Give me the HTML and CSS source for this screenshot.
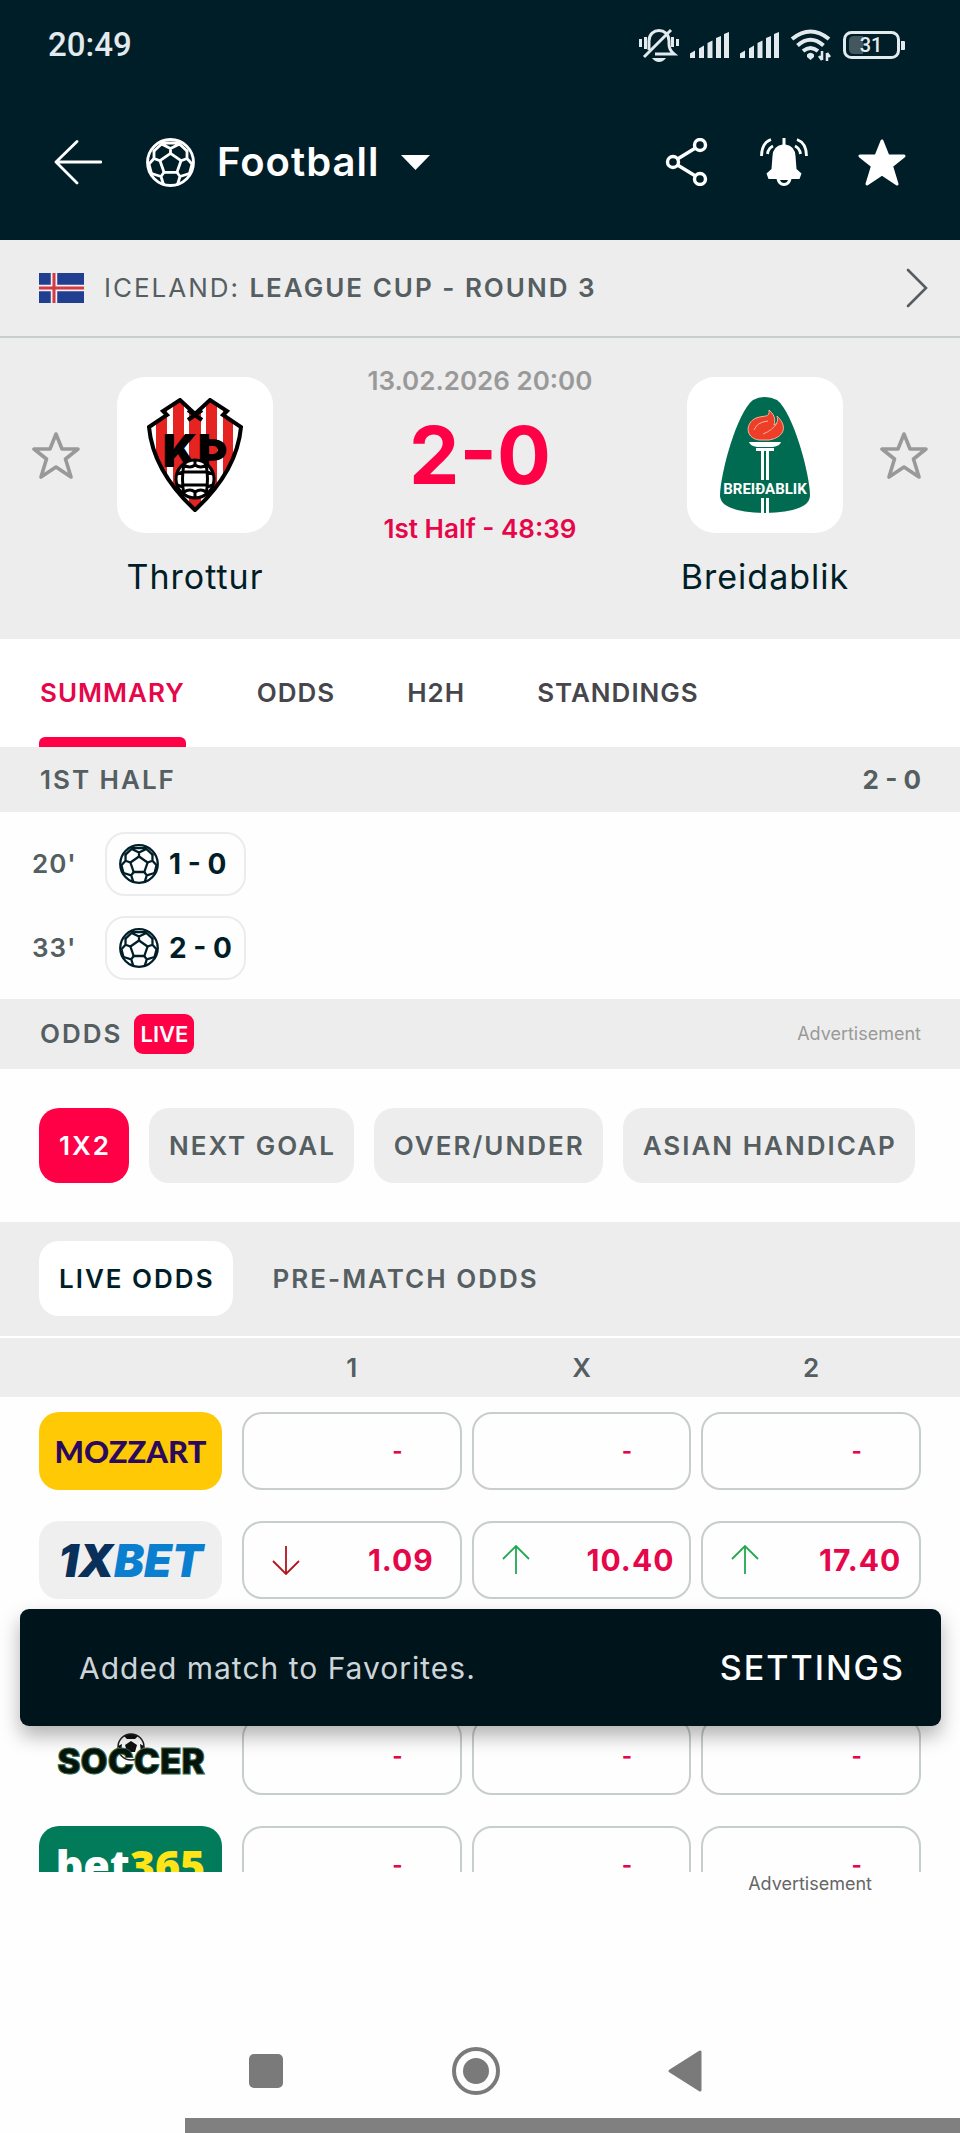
FILE: index.html
```html
<!DOCTYPE html>
<html lang="en">
<head>
<meta charset="utf-8">
<meta name="viewport" content="width=device-width, initial-scale=1">
<title>Throttur - Breidablik</title>
<link rel="stylesheet" href="styles.css">
</head>
<body>
<svg class="defs" aria-hidden="true">
  <symbol id="ball" viewBox="0 0 49 49">
    <g fill="none" stroke="currentColor" stroke-width="2.800" stroke-linejoin="round" stroke-linecap="round">
      <circle cx="24.500" cy="24.500" r="23"/>
      <path d="M24.500 15.300 35 22.700 31 34.300H18L14 22.700Z"/>
      <path d="M24.500 15.300V10.500M24.500 10.500 15.500 6M24.500 10.500 33.500 6M15.500 6 8 13M33.500 6 41 13M16 5 33 5"/>
      <path d="M35 22.700 41 20.500 41 13M41 20.500 46 26 43.500 35.500"/>
      <path d="M14 22.700 8 20.500 8 13M8 20.500 3 26 5.500 35.500"/>
      <path d="M31 34.300 34 38.500 31.500 46.500M34 38.500 43.500 35.500"/>
      <path d="M18 34.300 15 38.500 17.500 46.500M15 38.500 5.500 35.500"/>
    </g>
  </symbol>
  <symbol id="star" viewBox="0 0 48 48">
    <path d="M24 3 30 18H46L33.500 28 39 46 24 36 9 46 14.500 28 2 18H18Z"/>
  </symbol>
  <symbol id="signal" viewBox="0 0 39 26">
    <path fill="currentColor" d="M0 21.500 5 18.500V26H0ZM9 16.500 14 13.500V26H9ZM17.500 11 22.500 8.500V26H17.500ZM26 6 31 4V26H26ZM34 2 39 0V26H34Z"/>
  </symbol>
  <symbol id="down" viewBox="0 0 28 30">
    <path d="M14 1V29M1 16 14 29 27 16" fill="none" stroke="currentColor" stroke-width="1.800"/>
  </symbol>
  <symbol id="up" viewBox="0 0 28 30">
    <path d="M14 29V1M1 14 14 1 27 14" fill="none" stroke="currentColor" stroke-width="1.800"/>
  </symbol>
</svg>

<header class="top">
  <div class="status">
    <time class="clock">20:49</time>
    <div class="status-icons">
      <svg width="40" height="34" viewBox="0 0 40 34" fill="none" stroke="currentColor" stroke-width="3">
        <path d="M10 22V13C10 -1 30 -1 30 13V16Q30 22 35 26H16" />
        <path d="M32 2 5 29"/>
        <path d="M13 30H27Q24 34 20 34T13 30" fill="currentColor" stroke="none"/>
        <path d="M1.500 11V19M6.500 9V21M33.500 9V19M38.500 11V18"/>
      </svg>
      <svg width="39" height="26"><use href="#signal"/></svg>
      <svg width="39" height="26"><use href="#signal"/></svg>
      <svg width="42" height="32" viewBox="0 0 42 32" fill="none" stroke="currentColor" stroke-width="4">
        <path d="M2 10Q20.500-5 39 10M7.500 16.500Q20.500 5 33.500 16.500M13 22Q20.500 16 28 22"/>
        <path d="M17 25.500Q20.500 22 24 25.500V28L20.500 31 17 28Z" fill="currentColor" stroke="none"/>
        <path d="M32 22V31M37 24V32M29 27 32 31M37 24 40 28" stroke-width="2.500"/>
      </svg>
      <svg width="63" height="28" viewBox="0 0 63 28">
        <rect x="1.500" y="1.500" width="54" height="25" rx="7" fill="none" stroke="currentColor" stroke-width="3"/>
        <path d="M11 5H20V23H11Q6 23 6 18V10Q6 5 11 5" fill="#43575f"/>
        <path d="M58 10H61Q62 10 62 11V18Q62 19 61 19H58Z" fill="currentColor"/>
        <text class="battery-text" x="28" y="21" text-anchor="middle">31</text>
      </svg>
    </div>
  </div>
  <div class="toolbar">
    <button class="icon-btn" aria-label="Back">
      <svg width="48" height="48" viewBox="0 0 48 48" fill="none" stroke="currentColor" stroke-linecap="round" stroke-linejoin="round"><path d="M47 24H2M23 3.500 2 24 23 45" stroke-width="2.800"/></svg>
    </button>
    <button class="sport">
      <svg width="49" height="49"><use href="#ball"/></svg>
      <span>Football</span>
      <svg width="29" height="15" viewBox="0 0 29 15"><path d="M0 0H29L14.500 15Z" fill="currentColor"/></svg>
    </button>
    <div class="actions">
      <button class="icon-btn" aria-label="Share">
        <svg width="48" height="48" viewBox="0 0 48 48" fill="none" stroke="currentColor" stroke-width="3.400"><circle cx="11" cy="24" r="5.500"/><circle cx="38" cy="7" r="5.500"/><circle cx="38" cy="41" r="5.500"/><path d="M15.500 21 33.500 10M15.500 27 33.500 38"/></svg>
      </button>
      <button class="icon-btn" aria-label="Notifications">
        <svg width="48" height="48" viewBox="0 0 48 48"><path fill="currentColor" d="M22.500 0H25.500V6.500Q35 8 35.500 18L36.500 31 41.500 35.500 39.500 41H31.500Q30 48 24 48T16.500 41H8.500L6.500 35.500 11.500 31 12.500 18Q13 8 22.500 6.500Z"/><path fill="#001e28" d="M20 42H28Q27 45 24 45T20 42"/><path d="M1.500 18Q1.500 5 11 1.500M7.500 16Q8 10.500 13 8M46.500 18Q46.500 5 37 1.500M40.500 16Q40 10.500 35 8" fill="none" stroke="currentColor" stroke-width="2.800"/></svg>
      </button>
      <button class="icon-btn" aria-label="Remove from favorites">
        <svg width="48" height="48" fill="currentColor" stroke="currentColor" stroke-width="3" stroke-linejoin="round"><use href="#star"/></svg>
      </button>
    </div>
  </div>
</header>

<main class="content">
  <a class="league" href="#league">
    <svg width="45" height="30" viewBox="0 0 45 30"><path fill="#213e91" d="M0 0H45V30H0Z"/><path d="M15 0V30M0 15H45" stroke="#f4eef0" stroke-width="6.500"/><path d="M15 0V30M0 15H45" stroke="#d43a41" stroke-width="3"/></svg>
    <span class="league-name">ICELAND: <b>LEAGUE CUP - ROUND 3</b></span>
    <svg width="22" height="40" viewBox="0 0 22 40"><path d="M2 2 20 20 2 38" fill="none" stroke="currentColor" stroke-width="2.600" stroke-linecap="round"/></svg>
  </a>

  <section class="match">
    <button class="icon-btn fav" aria-label="Favorite Throttur"><svg width="48" height="48" fill="none" stroke="currentColor" stroke-width="3.600" stroke-linejoin="round"><use href="#star"/></svg></button>
    <div class="crest">
      <svg width="96" height="114" viewBox="0 0 96 114" role="img" aria-label="Throttur crest">
        <defs><clipPath id="shield"><path d="M2 29 20 17 16 13 33 2 48 16 63 2 80 13 76 17 94 29Q90 73 48 112 6 73 2 29Z"/></clipPath></defs>
        <g clip-path="url(#shield)"><path fill="#fff" d="M0 0H96V114H0Z"/><path fill="#e52320" d="M9 0H20V114H9ZM26 0H37V114H26ZM42 0H54V114H42ZM59 0H70V114H59ZM76 0H86V114H76Z"/></g>
        <path d="M2 29 20 17 16 13 33 2 48 16 63 2 80 13 76 17 94 29Q90 73 48 112 6 73 2 29ZM41 22 55 12M41 12 55 22" fill="none" stroke="#000" stroke-width="4"/>
        <text class="crest-kp" x="49" y="69" text-anchor="middle">KÞ</text>
        <circle cx="48" cy="81" r="19" fill="#fff" stroke="#000" stroke-width="3"/>
        <path d="M37 66Q34 81 37 97M59 66Q62 81 59 97M37 74H59M37 87H59M48 62V67M48 94V100M37 67Q43 71 48 67 54 71 59 67M37 94Q43 90 48 94 54 90 59 94M30 76 36 74M30 87 36 89M66 76 60 74M66 87 60 89" fill="none" stroke="#000" stroke-width="3"/>
      </svg>
    </div>
    <div class="result">
      <time class="date">13.02.2026 20:00</time>
      <strong class="score">2-0</strong>
      <span class="period">1st Half - 48:39</span>
    </div>
    <div class="crest">
      <svg width="92" height="118" viewBox="0 0 92 118" role="img" aria-label="Breidablik crest">
        <path fill="#006b50" d="M34 4Q46-2 58 4C74 16 91 78 91 100Q90 116 46 117 2 116 1 100C1 78 18 16 34 4Z"/>
        <path fill="#ef3e27" stroke="#f3b4a0" stroke-width="1" d="M40 44C26 42 26 27 37 22 46 19 51 22 50 14 57 20 56 25 55 29 59 27 59 24 58 20 68 29 67 41 50 44Z"/>
        <path d="M35 34Q38 26 49 25M44 38Q54 34 58 27" fill="none" stroke="#f3b4a0" stroke-width="1"/>
        <path fill="#fff" d="M30 46H62Q61 50 54 51H38Q31 50 30 46ZM37 52H55V55H37ZM42 55H45V84H42ZM47 55H50V84H47ZM42 102H45V118H42ZM47 102H50V118H47Z"/>
        <text class="crest-name" x="46" y="98" text-anchor="middle">BREIÐABLIK</text>
      </svg>
    </div>
    <button class="icon-btn fav" aria-label="Favorite Breidablik"><svg width="48" height="48" fill="none" stroke="currentColor" stroke-width="3.600" stroke-linejoin="round"><use href="#star"/></svg></button>
    <h2 class="team home">Throttur</h2>
    <h2 class="team away">Breidablik</h2>
  </section>

  <nav class="tabs">
    <a class="tab active" href="#summary">SUMMARY</a>
    <a class="tab" href="#odds">ODDS</a>
    <a class="tab" href="#h2h">H2H</a>
    <a class="tab" href="#standings">STANDINGS</a>
  </nav>

  <div class="section-bar half"><span>1ST HALF</span><span class="half-score">2 - 0</span></div>
  <ul class="events">
    <li class="event"><span class="minute">20'</span><span class="goal"><svg width="40" height="40"><use href="#ball"/></svg><span>1 - 0</span></span></li>
    <li class="event"><span class="minute">33'</span><span class="goal"><svg width="40" height="40"><use href="#ball"/></svg><span>2 - 0</span></span></li>
  </ul>

  <div class="section-bar odds-bar"><span class="odds-title">ODDS <span class="live">LIVE</span></span><small class="ad-note">Advertisement</small></div>
  <div class="chips">
    <button class="chip selected">1X2</button>
    <button class="chip">NEXT GOAL</button>
    <button class="chip">OVER/UNDER</button>
    <button class="chip">ASIAN HANDICAP</button>
  </div>
  <div class="chips modes">
    <button class="chip current">LIVE ODDS</button>
    <button class="chip">PRE-MATCH ODDS</button>
  </div>

  <div class="odds-area">
    <div class="odds-clip">
      <table class="odds">
        <thead><tr><th></th><th>1</th><th>X</th><th>2</th></tr></thead>
        <tbody>
          <tr>
            <td><a class="book mozzart" href="#mozzart">MOZZART</a></td>
            <td><button class="odd"><i></i><span class="none">-</span></button></td>
            <td><button class="odd"><i></i><span class="none">-</span></button></td>
            <td><button class="odd"><i></i><span class="none">-</span></button></td>
          </tr>
          <tr>
            <td><a class="book xbet" href="#1xbet"><b>1X</b>BET</a></td>
            <td><button class="odd"><i class="fall"><svg width="28" height="30"><use href="#down"/></svg></i><span>1.09</span></button></td>
            <td><button class="odd"><i class="rise"><svg width="28" height="30"><use href="#up"/></svg></i><span>10.40</span></button></td>
            <td><button class="odd"><i class="rise"><svg width="28" height="30"><use href="#up"/></svg></i><span>17.40</span></button></td>
          </tr>
        </tbody>
        <tbody class="more">
          <tr>
            <td><a class="book soccer" href="#soccer">
              <svg width="160" height="48" viewBox="0 0 160 48">
                <circle cx="80" cy="15" r="13" fill="#fff" stroke="#222" stroke-width="1.500"/>
                <path d="M80 9 86 13 84 20H76L74 13ZM73 4 80 2 87 4 84 7H76ZM67 14 71 12 70 20ZM93 14 89 12 90 20Z" fill="#111"/>
                <text class="soccer-text" x="80" y="42" text-anchor="middle">SOCCER</text>
              </svg></a></td>
            <td><button class="odd"><i></i><span class="none">-</span></button></td>
            <td><button class="odd"><i></i><span class="none">-</span></button></td>
            <td><button class="odd"><i></i><span class="none">-</span></button></td>
          </tr>
          <tr>
            <td><a class="book bet365" href="#bet365">bet<b>365</b></a></td>
            <td><button class="odd"><i></i><span class="none">-</span></button></td>
            <td><button class="odd"><i></i><span class="none">-</span></button></td>
            <td><button class="odd"><i></i><span class="none">-</span></button></td>
          </tr>
        </tbody>
      </table>
    </div>
    <div class="snackbar" role="status"><span>Added match to Favorites.</span><button class="snack-action">SETTINGS</button></div>
  </div>
</main>

<aside class="banner"><small class="ad-note">Advertisement</small></aside>
<footer class="system-nav">
  <button class="icon-btn" aria-label="Recent apps"><svg width="50" height="50"><rect x="8" y="8" width="34" height="34" rx="5" fill="currentColor"/></svg></button>
  <button class="icon-btn" aria-label="Home"><svg width="50" height="50"><circle cx="25" cy="25" r="22" fill="none" stroke="currentColor" stroke-width="4"/><circle cx="25" cy="25" r="13" fill="currentColor"/></svg></button>
  <button class="icon-btn" aria-label="System back"><svg width="50" height="50"><path d="M39 6V44L9 25Z" fill="currentColor" stroke="currentColor" stroke-width="3" stroke-linejoin="round"/></svg></button>
</footer>
<div class="edge"></div>
</body>
</html>
```
FILE: styles.css
```css
:root {
  --navy: #001e28;
  --accent: #ff0046;
  --accent-text: #e6064a;
  --grey: #ededed;
  --text: #555e61;
  --muted: #999;
  --line: #c8cdcd;
  --edge: 39px;
}

* { box-sizing: border-box; }

body {
  display: flex;
  flex-direction: column;
  height: 100vh;
  margin: 0;
  background: #fefefe;
  color: var(--text);
  font: 600 26px/32px Inter, Roboto, sans-serif;
}

button {
  padding: 0;
  border: 0;
  background: none;
  color: inherit;
  font: inherit;
}

a { color: inherit; text-decoration: none; }
svg { display: block; flex: none; }
.defs { position: absolute; width: 0; height: 0; }

.top { background: var(--navy); color: #fff; }

.status {
  display: flex;
  align-items: center;
  justify-content: space-between;
  height: 84px;
  padding: 6px 54px 0 48px;
  color: #e2eaed;
}

.clock { font: 500 33px/40px Roboto, sans-serif; }
.status-icons { display: flex; align-items: center; gap: 11px; }
.battery-text { font: 500 20px Roboto, sans-serif; fill: #e2eaed; }

.toolbar {
  display: flex;
  align-items: center;
  height: 156px;
  padding: 0 54px;
}

.icon-btn { display: grid; place-items: center; }

.sport {
  display: flex;
  align-items: center;
  gap: 22px;
  margin-left: 44px;
  font-size: 40px;
  line-height: 48px;
  letter-spacing: 1px;
}

.actions { display: flex; gap: 50px; margin-left: auto; }

.content { display: flex; flex: 1; flex-direction: column; min-height: 0; }
.content > * { flex: none; }

.league {
  display: flex;
  align-items: center;
  gap: 20px;
  height: 98px;
  padding: 0 32px 0 var(--edge);
  border-bottom: 2px solid var(--line);
  background: var(--grey);
}

.league-name { flex: 1; font-weight: 400; letter-spacing: 2px; }
.league-name b { font-weight: 600; }

.match {
  display: grid;
  grid-template-columns: 48px 23fr 34fr 23fr 48px;
  row-gap: 14px;
  align-items: center;
  padding: 29px 32px 42px;
  background: var(--grey);
}

.fav { color: var(--muted); }

.crest {
  display: grid;
  place-items: center;
  justify-self: center;
  width: 156px;
  height: 156px;
  border-radius: 28px;
  background: #fff;
}

.crest-kp { font: 900 46px Inter, sans-serif; fill: #000; }
.crest-name { font: 700 15px Roboto, sans-serif; fill: #fff; }

.result {
  display: flex;
  flex-direction: column;
  align-items: center;
  justify-content: space-between;
  height: 176px;
  line-height: 28px;
}

.date { color: var(--muted); }
.score { color: var(--accent); font-size: 80px; font-weight: 700; line-height: 80px; }
.period { color: var(--accent-text); }

.team {
  margin: 0;
  color: var(--navy);
  font-size: 34px;
  font-weight: 400;
  line-height: 40px;
  letter-spacing: 1px;
  text-align: center;
}

.home { grid-column: 2; }
.away { grid-column: 4; }

.tabs {
  display: flex;
  gap: 70px;
  height: 108px;
  padding: 0 var(--edge);
  background: #fff;
}

.tab {
  display: flex;
  align-items: center;
  padding: 0 1px;
  color: #46464c;
  letter-spacing: 1px;
}

.tab.active {
  position: relative;
  color: var(--accent-text);
}

.tab.active::after {
  position: absolute;
  right: 0;
  bottom: 0;
  left: 0;
  height: 10px;
  border-radius: 6px 6px 0 0;
  background: var(--accent);
  content: "";
}

.section-bar {
  display: flex;
  align-items: center;
  justify-content: space-between;
  padding: 0 var(--edge) 0 40px;
  background: var(--grey);
}

.half { height: 65px; letter-spacing: 2px; }
.half-score { font-weight: 700; letter-spacing: 0; }
.odds-bar { height: 70px; }

.events {
  display: grid;
  gap: 20px;
  margin: 0;
  padding: 20px 32px 19px;
  list-style: none;
}

.event { display: flex; align-items: center; }
.minute { width: 73px; letter-spacing: 1px; }

.goal {
  display: flex;
  align-items: center;
  gap: 10px;
  min-width: 141px;
  height: 64px;
  padding: 0 12px;
  border: 2px solid #ececec;
  border-radius: 20px;
  color: var(--navy);
  font-size: 28px;
  font-weight: 700;
}

.odds-title { display: flex; align-items: center; gap: 12px; letter-spacing: 2px; }

.live {
  padding: 0 6px;
  border-radius: 9px;
  background: var(--accent);
  color: #fff;
  font-size: 22px;
  line-height: 40px;
  letter-spacing: 0;
}

.ad-note { color: var(--muted); font-size: 18px; font-weight: 400; line-height: 24px; }

.chips { display: flex; gap: 20px; padding: 39px var(--edge); }

.chip {
  flex: none;
  height: 75px;
  padding: 0 18px 0 20px;
  border-radius: 20px;
  background: var(--grey);
  white-space: nowrap;
  letter-spacing: 2px;
}

.chip.selected { background: var(--accent); color: #fff; }
.chip.current { background: #fff; color: var(--navy); }

.modes {
  padding: 19px var(--edge) 20px;
  border-bottom: 2px solid #fff;
  background: var(--grey);
}

.content > .odds-area { position: relative; flex: 1; min-height: 0; }
.odds-clip { height: 100%; overflow: hidden; }
.odds, .odds thead, .odds tbody { display: block; }

.odds tr {
  display: grid;
  grid-template-columns: 193px repeat(3, 1fr);
  column-gap: 10px;
  padding: 15px var(--edge) 16px;
}

.odds thead tr { padding-block: 14px 13px; background: var(--grey); }
.odds th { padding: 0; font-weight: 600; }
.odds td { padding: 0; }
.more { padding-top: 87px; }

.book {
  display: grid;
  grid-auto-flow: column;
  place-content: center;
  align-items: center;
  width: 183px;
  height: 78px;
  border-radius: 20px;
}

.mozzart { background: #ffca05; color: #2b0a5e; font: 900 31px Lato, sans-serif; }
.xbet { background: #efefef; color: #0a7fd0; font: italic 900 45px Inter, sans-serif; }
.xbet b { color: #08305a; font-weight: 900; }
.soccer-text { font: 900 35px Inter, sans-serif; fill: #06140c; stroke: #356b4b; stroke-width: 1px; }
.bet365 { background: #027b5b; color: #fff; font: 800 43px/48px "Open Sans", sans-serif; }
.bet365 b { color: #ffe418; font-weight: 800; }

.odd {
  display: flex;
  align-items: center;
  width: 100%;
  height: 78px;
  border: 2px solid var(--line);
  border-radius: 20px;
  color: var(--accent-text);
  font-size: 30px;
  font-weight: 700;
  letter-spacing: 1px;
}

.odd i { display: grid; place-items: center; width: 84px; }
.odd span { flex: 1; padding-left: 14px; }
.odd .none { padding-left: 8px; font-size: 22px; }
.fall { color: #b3151b; }
.rise { color: #22a94f; }

.snackbar {
  position: absolute;
  right: 19px;
  bottom: 146px;
  left: 20px;
  display: flex;
  align-items: center;
  justify-content: space-between;
  height: 117px;
  padding: 0 36px 0 59px;
  border-radius: 9px;
  background: #00141b;
  box-shadow: 0 10px 20px rgb(0 0 0 / 30%);
  color: #ced5d8;
  font-size: 30px;
  font-weight: 400;
  letter-spacing: 1px;
}

.snack-action { color: #fff; font-size: 34px; font-weight: 500; letter-spacing: 2px; }

.banner {
  height: 138px;
  padding: 0 88px;
  text-align: right;
  line-height: 24px;
}

.banner .ad-note { display: block; color: #666; }

.system-nav {
  display: flex;
  justify-content: center;
  gap: 160px;
  height: 108px;
  padding: 36px 8px 0 0;
  color: #7a7a7a;
}

.system-nav .icon-btn { height: 50px; }
.edge { height: 15px; margin-left: 185px; background: #808080; }
```
